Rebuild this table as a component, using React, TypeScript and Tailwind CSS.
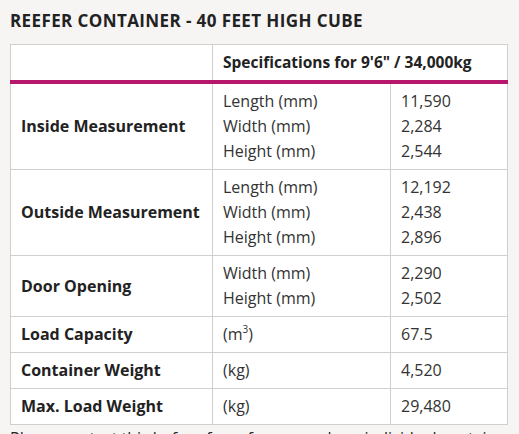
import React from 'react';

type Row = {
  label: string;
  specs: React.ReactNode[];
  values: string[];
};

const rows: Row[] = [
  {
    label: 'Inside Measurement',
    specs: ['Length (mm)', 'Width (mm)', 'Height (mm)'],
    values: ['11,590', '2,284', '2,544'],
  },
  {
    label: 'Outside Measurement',
    specs: ['Length (mm)', 'Width (mm)', 'Height (mm)'],
    values: ['12,192', '2,438', '2,896'],
  },
  {
    label: 'Door Opening',
    specs: ['Width (mm)', 'Height (mm)'],
    values: ['2,290', '2,502'],
  },
  {
    label: 'Load Capacity',
    specs: [
      <span key="m3">
        (m<sup className="text-[10px] -top-[7px]">3</sup>)
      </span>,
    ],
    values: ['67.5'],
  },
  { label: 'Container Weight', specs: ['(kg)'], values: ['4,520'] },
  { label: 'Max. Load Weight', specs: ['(kg)'], values: ['29,480'] },
];

export default function App() {
  return (
    <div
      className="w-[519px] h-[434px] overflow-hidden bg-[#f6f5f4] text-[#222] px-[10px] pt-[10px]"
      style={{ fontFamily: '"Open Sans", Lato, sans-serif' }}
    >
      <h2 className="text-[17px] font-bold leading-[22px] tracking-[0.4px] mb-[12px]">
        REEFER CONTAINER - 40 FEET HIGH CUBE
      </h2>

      <table className="w-[497px] border-collapse bg-white text-[16px] leading-[25px] table-fixed">
        <colgroup>
          <col className="w-[202px]" />
          <col className="w-[178px]" />
          <col className="w-[117px]" />
        </colgroup>
        <thead>
          <tr>
            <th className="border border-[#cfcfcf] border-b-[#b8176e] border-b-4 px-[10px] py-[5px]"></th>
            <th
              colSpan={2}
              className="border border-[#cfcfcf] border-b-[#b8176e] border-b-4 px-[10px] py-[5px] text-left font-bold text-[15.5px] whitespace-nowrap"
            >
              Specifications for 9'6" / 34,000kg
            </th>
          </tr>
        </thead>
        <tbody>
          {rows.map((row) => (
            <tr key={row.label}>
              <td className="border border-[#cfcfcf] px-[10px] py-[5px] font-bold align-middle">
                {row.label}
              </td>
              <td className="border border-[#cfcfcf] px-[10px] py-[5px] text-[#333]">
                {row.specs.map((s, i) => (
                  <div key={i}>{s}</div>
                ))}
              </td>
              <td className="border border-[#cfcfcf] px-[10px] py-[5px] text-[#333]">
                {row.values.map((v) => (
                  <div key={v}>{v}</div>
                ))}
              </td>
            </tr>
          ))}
        </tbody>
      </table>

      <p className="text-[16px] leading-[25px] mt-[1px] whitespace-nowrap">
        Please contact this before for reference only as individual container may vary
      </p>
    </div>
  );
}
